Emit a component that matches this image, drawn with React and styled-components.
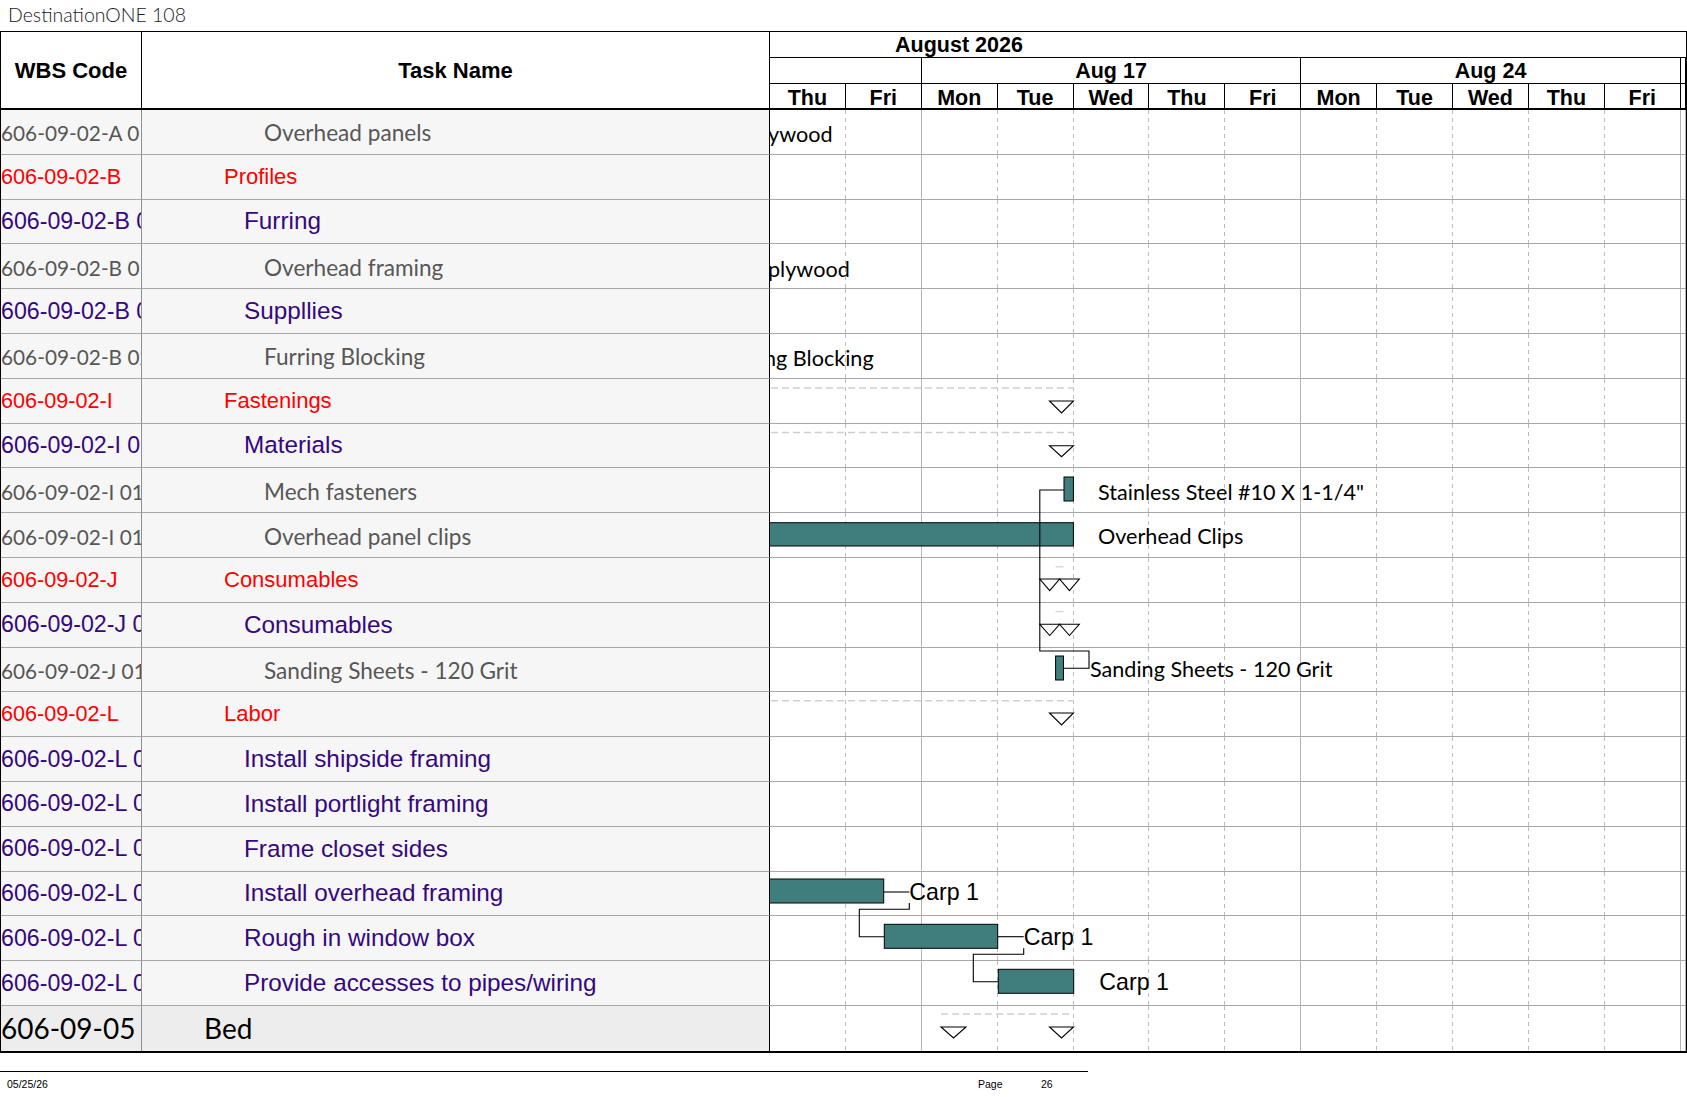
import React from 'react';
import styled, { createGlobalStyle } from 'styled-components';

const CAL = '"Lato", "Open Sans", sans-serif';
const ARIAL = '"Liberation Sans", Arial, sans-serif';
const ROW_H = 44.8;
const DAY_W = 75.9;

const GlobalStyle = createGlobalStyle`
  html, body { margin: 0; padding: 0; background: #fff; }
  body { font-family: ${ARIAL}; color: #000; }
  * { box-sizing: border-box; }
`;

const Page = styled.div`
  width: 1687px;
  height: 1097px;
  overflow: hidden;
  background: #fff;
`;

const Title = styled.div`
  height: 31px;
  padding-left: 8px;
  font-family: ${CAL};
  font-weight: 300;
  font-size: 19.5px;
  line-height: 30px;
  color: #1a1a1a;
`;

const Table = styled.div`
  width: 1687px;
  border-top: 1px solid #000;
  border-left: 1px solid #000;
  border-right: 1px solid #000;
  border-bottom: 2px solid #000;
`;

const HeaderRow = styled.div`
  display: grid;
  grid-template-columns: 141px 628px 1fr;
  height: 78px;
  border-bottom: 2px solid #000;
`;

const HeadCell = styled.div`
  display: flex;
  align-items: center;
  justify-content: center;
  padding-top: 1px;
  border-right: 1px solid #000;
  font-family: ${ARIAL};
  font-weight: bold;
  font-size: 22px;
`;

const TimeHead = styled.div`
  display: flex;
  flex-direction: column;
`;

const MonthRow = styled.div`
  height: 26px;
  border-bottom: 1px solid #000;
  padding: 1px 0 0 125px;
  font-weight: bold;
  font-size: 21.5px;
  line-height: 25px;
`;

const ScaleRow = styled.div`
  display: flex;
  height: ${(p) => p.$h}px;
  border-bottom: ${(p) => (p.$last ? 'none' : '1px solid #000')};
`;

const ScaleCell = styled.div`
  flex: ${(p) => (p.$w ? `0 0 ${p.$w}px` : '1 1 auto')};
  border-right: 1px solid #000;
  display: flex;
  align-items: center;
  justify-content: center;
  padding-top: ${(p) => p.$pt || 1}px;
  font-weight: bold;
  font-size: 21.5px;
  white-space: nowrap;
  overflow: hidden;
`;

const Body = styled.div`
  position: relative;
`;

const BodyRow = styled.div`
  display: grid;
  grid-template-columns: 141px 628px 1fr;
  height: ${(p) => (p.$bed ? 45 : ROW_H)}px;
`;

const levelStyle = {
  1: { font: CAL, size: 28, wbsSize: 28, color: '#000' },
  2: { font: ARIAL, size: 22, wbsSize: 21.6, color: '#f00' },
  3: { font: ARIAL, size: 24.3, wbsSize: 23.2, color: '#35087f' },
  4: { font: CAL, size: 22.6, wbsSize: 20.8, color: '#575757' },
};

const WbsCell = styled.div`
  display: flex;
  align-items: center;
  overflow: hidden;
  white-space: nowrap;
  padding-top: ${(p) => (p.$lvl === 4 ? 2 : 0)}px;
  background: ${(p) => (p.$bed ? '#ededed' : '#f6f6f6')};
  border-right: 1px solid #8f8f8f;
  border-bottom: ${(p) => (p.$bed ? 'none' : '1px solid #a8a8a8')};
  font-family: ${(p) => levelStyle[p.$lvl].font};
  font-size: ${(p) => levelStyle[p.$lvl].wbsSize}px;
  color: ${(p) => levelStyle[p.$lvl].color};
`;

const TaskCell = styled.div`
  display: flex;
  align-items: center;
  overflow: hidden;
  white-space: nowrap;
  padding-left: ${(p) => 42 + p.$lvl * 20}px;
  padding-top: ${(p) => (p.$lvl === 4 ? 2 : 0)}px;
  background: ${(p) => (p.$bed ? '#ededed' : '#f6f6f6')};
  border-right: 1px solid #000;
  border-bottom: ${(p) => (p.$bed ? 'none' : '1px solid #a8a8a8')};
  font-family: ${(p) => levelStyle[p.$lvl].font};
  font-size: ${(p) => levelStyle[p.$lvl].size}px;
  color: ${(p) => levelStyle[p.$lvl].color};
`;

const TimeCell = styled.div`
  display: flex;
  background: #fff;
  border-bottom: ${(p) => (p.$bed ? 'none' : '1px solid #a8a8a8')};
`;

const DayCell = styled.div`
  flex: ${(p) => (p.$rest ? '1 1 auto' : `0 0 ${DAY_W}px`)};
  ${(p) =>
    p.$week
      ? 'border-right: 1px solid #b4b4b4;'
      : `background-image: repeating-linear-gradient(to bottom, #bdbdbd 0 4px, transparent 4px 8px);
         background-size: 1px 100%;
         background-position: right top;
         background-repeat: no-repeat;`}
`;

const Chart = styled.svg`
  position: absolute;
  left: 769px;
  top: 0;
  pointer-events: none;
`;

const Footer = styled.div`
  width: 1088px;
  margin-top: 18px;
  border-top: 1.5px solid #000;
  display: grid;
  grid-template-columns: 971px 63px auto;
  padding: 6px 0 0 7px;
  font-family: ${ARIAL};
  font-size: 10.5px;
  line-height: 13px;
  color: #000;
`;

const rows = [
  { wbs: '606-09-02-A 01', name: 'Overhead panels', lvl: 4 },
  { wbs: '606-09-02-B', name: 'Profiles', lvl: 2 },
  { wbs: '606-09-02-B 01', name: 'Furring', lvl: 3 },
  { wbs: '606-09-02-B 01 01', name: 'Overhead framing', lvl: 4 },
  { wbs: '606-09-02-B 02', name: 'Suppllies', lvl: 3 },
  { wbs: '606-09-02-B 02 01', name: 'Furring Blocking', lvl: 4 },
  { wbs: '606-09-02-I', name: 'Fastenings', lvl: 2 },
  { wbs: '606-09-02-I 01', name: 'Materials', lvl: 3 },
  { wbs: '606-09-02-I 01 01', name: 'Mech fasteners', lvl: 4 },
  { wbs: '606-09-02-I 01 02', name: 'Overhead panel clips', lvl: 4 },
  { wbs: '606-09-02-J', name: 'Consumables', lvl: 2 },
  { wbs: '606-09-02-J 01', name: 'Consumables', lvl: 3 },
  { wbs: '606-09-02-J 01 01', name: 'Sanding Sheets - 120 Grit', lvl: 4 },
  { wbs: '606-09-02-L', name: 'Labor', lvl: 2 },
  { wbs: '606-09-02-L 01', name: 'Install shipside framing', lvl: 3 },
  { wbs: '606-09-02-L 02', name: 'Install portlight framing', lvl: 3 },
  { wbs: '606-09-02-L 03', name: 'Frame closet sides', lvl: 3 },
  { wbs: '606-09-02-L 04', name: 'Install overhead framing', lvl: 3 },
  { wbs: '606-09-02-L 05', name: 'Rough in window box', lvl: 3 },
  { wbs: '606-09-02-L 06', name: 'Provide accesses to pipes/wiring', lvl: 3 },
  { wbs: '606-09-05', name: 'Bed', lvl: 1, bed: true },
];

const days = ['Thu', 'Fri', 'Mon', 'Tue', 'Wed', 'Thu', 'Fri', 'Mon', 'Tue', 'Wed', 'Thu', 'Fri'];
const weekEnds = [1, 6, 11];

const BAR = '#407e7d';

const Tri = ({ x1, x2, y1, y2 }) => (
  <polygon
    points={`${x1},${y1} ${x2},${y1} ${(x1 + x2) / 2},${y2}`}
    fill="#fff"
    stroke="#000"
    strokeWidth="1.1"
  />
);

const Dash = ({ x1, x2, y }) => (
  <line x1={x1} x2={x2} y1={y} y2={y} stroke="#cfcfcf" strokeWidth="1.6" strokeDasharray="7 4" />
);

const Bar = ({ x1, x2, y1, y2 }) => (
  <rect x={x1} y={y1} width={x2 - x1} height={y2 - y1} fill={BAR} stroke="#000" strokeWidth="1" />
);

const Line = ({ pts }) => <polyline points={pts} fill="none" stroke="#000" strokeWidth="1.1" />;

const CalLabel = ({ x, y, size = 21.6, children }) => (
  <text x={x} y={y} fontFamily="Lato, 'Open Sans', sans-serif" fontSize={size} fill="#000" dominantBaseline="central">
    {children}
  </text>
);

const ArLabel = ({ x, y, children }) => (
  <text x={x} y={y} fontFamily="'Liberation Sans', Arial, sans-serif" fontSize="23.2" fill="#000" dominantBaseline="central">
    {children}
  </text>
);

function GanttDrawing() {
  return (
    <Chart width={917} height={941} viewBox="769 110 917 941">
      <CalLabel x={767} y={134}>ywood</CalLabel>
      <CalLabel x={767} y={268.5}>plywood</CalLabel>
      <CalLabel x={763} y={357.5}>ng Blocking</CalLabel>

      <Dash x1={770} x2={1073} y={388} />
      <Tri x1={1048.5} x2={1072.5} y1={401} y2={413} />

      <Dash x1={770} x2={1073} y={432.5} />
      <Tri x1={1048.5} x2={1072.5} y1={445.7} y2={456.7} />

      <Bar x1={1063} x2={1072.4} y1={477} y2={501} />
      <CalLabel x={1097} y={491.5}>Stainless Steel #10 X 1-1/4"</CalLabel>

      <Bar x1={760} x2={1072.4} y1={522.7} y2={546} />
      <CalLabel x={1097} y={536}>Overhead Clips</CalLabel>

      <line x1={1054.6} x2={1062.5} y1={566.7} y2={566.7} stroke="#d8d8d8" strokeWidth="1.5" />
      <Tri x1={1038.8} x2={1058.6} y1={579} y2={590.7} />
      <Tri x1={1058.6} x2={1078.3} y1={579} y2={590.7} />

      <line x1={1054.6} x2={1062.5} y1={611.5} y2={611.5} stroke="#d8d8d8" strokeWidth="1.5" />
      <Tri x1={1038.8} x2={1058.6} y1={624.3} y2={635.5} />
      <Tri x1={1058.6} x2={1078.3} y1={624.3} y2={635.5} />

      <Bar x1={1054.6} x2={1062.5} y1={656} y2={680} />
      <CalLabel x={1089} y={669}>Sanding Sheets - 120 Grit</CalLabel>

      <Line pts="1063,490 1038.8,490 1038.8,651 1088,651 1088,668.3 1062.5,668.3" />

      <Dash x1={770} x2={1073} y={700.7} />
      <Tri x1={1048.5} x2={1072.5} y1={713} y2={725} />

      <Bar x1={760} x2={882.7} y1={879} y2={903} />
      <Line pts="882.7,892 908.3,892" />
      <ArLabel x={908.3} y={892}>Carp 1</ArLabel>
      <Line pts="908.3,903 908.3,909.3 858.3,909.3 858.3,936.7 883.3,936.7" />

      <Bar x1={883.3} x2={996.7} y1={924.3} y2={948.3} />
      <Line pts="996.7,936.7 1022.7,936.7" />
      <ArLabel x={1022.7} y={936.7}>Carp 1</ArLabel>
      <Line pts="1022.7,948.3 1022.7,954.3 972.3,954.3 972.3,981.7 997.3,981.7" />

      <Bar x1={997.3} x2={1072.7} y1={969.3} y2={993.3} />
      <ArLabel x={1098.3} y={981.5}>Carp 1</ArLabel>

      <Dash x1={940} x2={1073} y={1014} />
      <Tri x1={940} x2={965} y1={1027} y2={1038} />
      <Tri x1={1048.5} x2={1072.5} y1={1027} y2={1038} />
    </Chart>
  );
}

function TimeGrid({ bed }) {
  return (
    <TimeCell $bed={bed}>
      {days.map((d, i) => (
        <DayCell key={i} $week={weekEnds.includes(i)} />
      ))}
      <DayCell $rest $week />
    </TimeCell>
  );
}

export default function App() {
  return (
    <Page>
      <GlobalStyle />
      <Title>DestinationONE 108</Title>
      <Table>
        <HeaderRow>
          <HeadCell>WBS Code</HeadCell>
          <HeadCell>Task Name</HeadCell>
          <TimeHead>
            <MonthRow>August 2026</MonthRow>
            <ScaleRow $h={26}>
              <ScaleCell $w={DAY_W * 2} />
              <ScaleCell $w={DAY_W * 5}>Aug 17</ScaleCell>
              <ScaleCell $w={DAY_W * 5}>Aug 24</ScaleCell>
              <ScaleCell />
            </ScaleRow>
            <ScaleRow $h={24} $last>
              {days.map((d, i) => (
                <ScaleCell key={i} $w={DAY_W} $pt={4}>
                  {d}
                </ScaleCell>
              ))}
              <ScaleCell />
            </ScaleRow>
          </TimeHead>
        </HeaderRow>
        <Body>
          {rows.map((r, i) => (
            <BodyRow key={i} $bed={r.bed}>
              <WbsCell $lvl={r.lvl} $bed={r.bed}>{r.wbs}</WbsCell>
              <TaskCell $lvl={r.lvl} $bed={r.bed}>{r.name}</TaskCell>
              <TimeGrid bed={r.bed} />
            </BodyRow>
          ))}
          <GanttDrawing />
        </Body>
      </Table>
      <Footer>
        <span>05/25/26</span>
        <span>Page</span>
        <span>26</span>
      </Footer>
    </Page>
  );
}
